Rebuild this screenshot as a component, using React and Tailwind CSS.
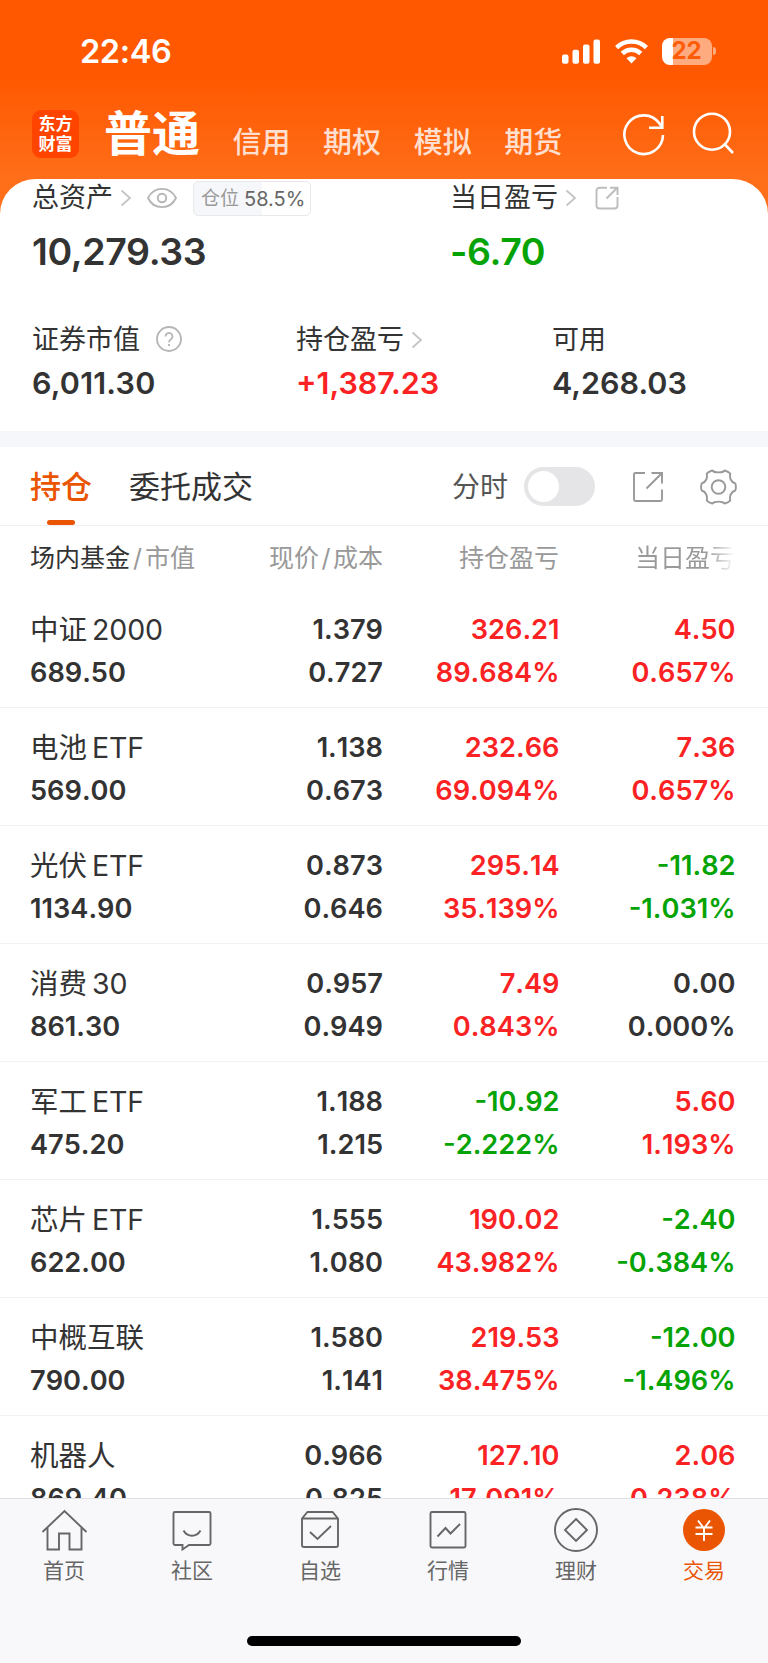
import React from 'react'
import clsx from 'clsx'

const tones = {
  up: 'text-[#fb2224]',
  down: 'text-[#06a306]',
  flat: 'text-[#333333]',
}

const accounts = ['信用', '期权', '模拟', '期货']

const holdings = [
  { name: '中证', suffix: '2000', value: '689.50', price: '1.379', cost: '0.727', profit: ['326.21', '89.684%', 'up'], today: ['4.50', '0.657%', 'up'] },
  { name: '电池', suffix: 'ETF', value: '569.00', price: '1.138', cost: '0.673', profit: ['232.66', '69.094%', 'up'], today: ['7.36', '0.657%', 'up'] },
  { name: '光伏', suffix: 'ETF', value: '1134.90', price: '0.873', cost: '0.646', profit: ['295.14', '35.139%', 'up'], today: ['-11.82', '-1.031%', 'down'] },
  { name: '消费', suffix: '30', value: '861.30', price: '0.957', cost: '0.949', profit: ['7.49', '0.843%', 'up'], today: ['0.00', '0.000%', 'flat'] },
  { name: '军工', suffix: 'ETF', value: '475.20', price: '1.188', cost: '1.215', profit: ['-10.92', '-2.222%', 'down'], today: ['5.60', '1.193%', 'up'] },
  { name: '芯片', suffix: 'ETF', value: '622.00', price: '1.555', cost: '1.080', profit: ['190.02', '43.982%', 'up'], today: ['-2.40', '-0.384%', 'down'] },
  { name: '中概互联', suffix: '', value: '790.00', price: '1.580', cost: '1.141', profit: ['219.53', '38.475%', 'up'], today: ['-12.00', '-1.496%', 'down'] },
  { name: '机器人', suffix: '', value: '869.40', price: '0.966', cost: '0.825', profit: ['127.10', '17.091%', 'up'], today: ['2.06', '0.238%', 'up'] },
]

function Chevron({ className }) {
  return (
    <svg className={clsx('h-[18px] w-[12px] shrink-0', className)} viewBox="0 0 12 18" fill="none" stroke="#c4c4c4" strokeWidth="1.8">
      <path d="M1.5 1.5 10 9l-8.500 7.500" />
    </svg>
  )
}

function StatusBar() {
  return (
    <div className="flex h-[102px] items-center pl-[80px] pr-[52px] text-white">
      <div className="mt-[2px] text-[32.500px] font-semibold leading-[40px] tracking-[-0.400px]">22:46</div>
      <svg className="ml-auto h-[25px] w-[39px]" viewBox="0 0 39 25" fill="#fff">
        <rect x="0" y="15.500" width="6.500" height="9.200" rx="2" />
        <rect x="10.500" y="10.700" width="6.500" height="14" rx="2" />
        <rect x="21" y="5.500" width="6.500" height="19.200" rx="2" />
        <rect x="31.500" y="0.500" width="6.500" height="24.200" rx="2" />
      </svg>
      <svg className="ml-[14px] h-[25px] w-[33px]" viewBox="0 0 33 25" fill="none" stroke="#fff" strokeWidth="4.600">
        <path d="M1.600 8.600a21.300 21.300 0 0 1 29.800 0" />
        <path d="M7.300 14.500a13.200 13.200 0 0 1 18.400 0" />
        <path d="M11.500 19.200a7.200 7.200 0 0 1 10 0l-5 5.300z" fill="#fff" stroke="none" />
      </svg>
      <div className="ml-[14px] flex h-[27px] w-[50px] items-center justify-center rounded-[8px] bg-[linear-gradient(90deg,#ffffff_23%,#ffab80_23%)] text-[24px] font-bold leading-none text-[#ff5c08]">
        22
      </div>
      <div className="ml-[1.500px] h-[8px] w-[3px] rounded-r-full bg-[#ffab80]" />
    </div>
  )
}

function AccountNav() {
  return (
    <div className="flex h-[77px] items-start pl-8 text-white">
      <div className="mt-[8px] h-[48px] w-[47px] rounded-[9px] bg-[#ff4400] pt-[3px] text-center font-['Noto_Sans_CJK_SC',sans-serif] text-[17px] font-bold leading-[20px]">
        东方<br />财富
      </div>
      <div className="ml-[25px] mt-[2px] w-[103px] text-[48px] font-bold leading-[60px]">普通</div>
      <div className="mt-[21px] flex flex-1 text-[29px] font-medium leading-[40px] text-[#ffdfcf]">
        {accounts.map((name) => (
          <div key={name} className="w-[90.600px] pl-[25.500px] whitespace-nowrap">{name}</div>
        ))}
      </div>
      <svg className="mt-[10px] h-[44px] w-[44px]" viewBox="0 0 44 44" fill="none" stroke="#fff" strokeWidth="2.600">
        <path d="M41 23A19.300 19.300 0 1 1 37.500 11.600L40 15" />
        <path d="M40.300 4v11.700H27" />
      </svg>
      <svg className="ml-[24px] mr-[34px] mt-[10px] h-[44px] w-[44px]" viewBox="0 0 44 44" fill="none" stroke="#fff" strokeWidth="2.600">
        <circle cx="22" cy="19.700" r="18" />
        <path d="m34 31.500 9 9.500" />
      </svg>
    </div>
  )
}

function Summary() {
  return (
    <div className="h-[252px] rounded-t-[35px] bg-white px-8 text-[#333333]">
      <div className="flex h-[37px] items-center text-[27px] leading-[37px]">
        <div className="flex w-[418px] items-center">
          <span>总资产</span>
          <Chevron className="ml-[7px]" />
          <svg className="ml-[15px] h-[22px] w-[30px]" viewBox="0 0 30 22" fill="none" stroke="#b5b5b5" strokeWidth="1.900">
            <path d="M1 11C7-1.200 23-1.200 29 11 23 23.200 7 23.200 1 11z" />
            <circle cx="15" cy="11" r="4.200" />
          </svg>
          <div className="ml-[16px] mt-[2px] flex h-[35px] w-[118px] items-center rounded-[5px] border border-[#e9e9ec] bg-[linear-gradient(90deg,#f6f7fa_58.500%,#ffffff_58.500%)] pl-[7px] text-[19px] leading-none text-[#999999]">
            仓位<span className="ml-[5px] text-[20px] text-[#666666]">58.5%</span>
          </div>
        </div>
        <span>当日盈亏</span>
        <Chevron className="ml-[7px]" />
        <svg className="ml-[18px] h-[24px] w-[24px]" viewBox="0 0 24 24" fill="none" stroke="#bdbdbd" strokeWidth="1.900">
          <path d="M12 1.800H4.500a3 3 0 0 0-3 3v14.700a3 3 0 0 0 3 3h15a3 3 0 0 0 3-3V11" />
          <path d="M11.500 12.500 22 2M15 1.800h7.500V9" />
        </svg>
      </div>
      <div className="mt-[14px] flex text-[37.500px] font-semibold leading-[44px] tracking-[-0.400px]">
        <div className="w-[418px]">10,279.33</div>
        <div className={tones.down}>-6.70</div>
      </div>
      <div className="mt-[46px] flex text-[27px] leading-[40px]">
        <div className="flex w-[264px] items-center">
          证券市值
          <svg className="mb-[2px] ml-[16px] h-[26px] w-[26px]" viewBox="0 0 26 26" fill="none" stroke="#b5b5b5" strokeWidth="1.800">
            <circle cx="13" cy="13" r="12" />
            <path d="M9.500 10.500a3.500 3.500 0 1 1 5.500 2.800c-1.300.9-2 1.500-2 3M13 18v2" />
          </svg>
        </div>
        <div className="flex w-[256px] items-center">
          持仓盈亏
          <Chevron className="ml-[7px]" />
        </div>
        <div>可用</div>
      </div>
      <div className="mt-[3px] flex text-[30.500px] font-semibold leading-[40px]">
        <div className="w-[264px] tracking-[0.200px]">6,011.30</div>
        <div className={clsx('w-[256px]', tones.up)}>+1,387.23</div>
        <div>4,268.03</div>
      </div>
    </div>
  )
}

function Toolbar() {
  return (
    <div className="flex h-[79px] items-center border-b border-[#f1f1f3] pl-[30px] pr-[31px] text-[31px] text-[#333333]">
      <div className="relative flex h-full items-center pt-[2px] font-medium text-[#ea5504]">
        持仓
        <div className="absolute bottom-0 left-[17px] h-[5px] w-[28px] rounded-[2.500px] bg-[#ea5504]" />
      </div>
      <div className="ml-[37px] pt-[2px]">委托成交</div>
      <div className="ml-auto pt-[2px] text-[28px] text-[#555555]">分时</div>
      <div className="ml-[16px] mt-[1px] flex h-[39px] w-[71px] items-center rounded-full bg-[#e5e5e7] p-[4px]">
        <div className="h-[31px] w-[31px] rounded-full bg-white" />
      </div>
      <svg className="ml-[37px] mt-[1px] h-[32px] w-[32px]" viewBox="0 0 32 32" fill="none" stroke="#999999" strokeWidth="1.900">
        <path d="M13 2H3.500A1.500 1.500 0 0 0 2 3.500v25A1.500 1.500 0 0 0 3.500 30h25a1.500 1.500 0 0 0 1.500-1.500V18.500" />
        <path d="M14.500 17.500 30 2M19.500 2H30v10.500" />
      </svg>
      <svg className="ml-[36px] mt-[1px] h-[36px] w-[37px]" viewBox="0 0 37 36" fill="none" stroke="#999999" strokeWidth="1.900" strokeLinejoin="round">
        <path d="M12.300 1.500C14.500 4 22.500 4 24.700 1.500Q28.500 2.500 30.300 4.700C29.300 8.300 30.800 13.300 35.300 14.500Q36.500 18 35.300 21.500C30.800 22.700 29.300 27.700 30.300 31.300Q28.500 33.500 24.700 34.500C22.500 32 14.500 32 12.300 34.500Q8.500 33.500 6.700 31.300C7.700 27.700 6.200 22.700 1.700 21.500Q.5 18 1.700 14.500C6.200 13.300 7.700 8.300 6.700 4.700Q8.500 2.500 12.300 1.500Z" />
        <circle cx="18.500" cy="18" r="6.800" />
      </svg>
    </div>
  )
}

function HoldingRow({ item }) {
  return (
    <div className="grid h-[118px] shrink-0 grid-cols-[177px_176px_176.500px_176px] border-b border-[#f3f3f5] pl-[30px] pt-[18px] text-[27.200px] font-semibold leading-[43px] text-[#333333] [font-kerning:none]">
      <div className="whitespace-nowrap">
        <div className="text-[28.500px] font-normal">
          {item.name}
          {item.suffix && <span className="ml-[5px] tracking-[-0.100px]">{item.suffix}</span>}
        </div>
        <div>{item.value}</div>
      </div>
      <div className="text-right">
        <div>{item.price}</div>
        <div>{item.cost}</div>
      </div>
      {[item.profit, item.today].map(([amount, rate, tone], i) => (
        <div key={i} className={clsx('text-right', tones[tone])}>
          <div>{amount}</div>
          <div>{rate}</div>
        </div>
      ))}
    </div>
  )
}

function Holdings() {
  return (
    <div className="flex h-[972px] flex-col overflow-hidden bg-white">
      <div className="grid h-[64px] shrink-0 grid-cols-[177px_176px_176px_176px] pl-[30px] text-[25px] leading-[65px] text-[#999999]">
        <div className="whitespace-nowrap">
          <span className="text-[#333333]">场内基金</span>
          <span className="mx-[3px]">/</span>市值
        </div>
        <div className="text-right">现价<span className="mx-[2.500px]">/</span>成本</div>
        <div className="text-right">持仓盈亏</div>
        <div className="bg-[linear-gradient(90deg,#999999_84%,#ffffff_100%)] bg-clip-text text-right text-transparent">当日盈亏</div>
      </div>
      {holdings.map((item) => (
        <HoldingRow key={item.name} item={item} />
      ))}
    </div>
  )
}

const tabs = [
  {
    label: '首页',
    icon: (
      <>
        <path d="M.5 23 22.500 2 44.500 23" />
        <path d="M5.500 19v21.500H17v-16h10.500v16H39.500V19" />
      </>
    ),
  },
  {
    label: '社区',
    icon: (
      <>
        <path d="M5 3h34a1.500 1.500 0 0 1 1.500 1.500v30A1.500 1.500 0 0 1 39 36H19l-6.500 4.500V36H5a1.500 1.500 0 0 1-1.500-1.500v-30A1.500 1.500 0 0 1 5 3z" />
        <path d="M13.500 21.500c4 7 13 7 17 0" />
      </>
    ),
  },
  {
    label: '自选',
    icon: (
      <>
        <path d="M4 9.500 9.500 3h25L40 9.500v26.500a2 2 0 0 1-2 2H6a2 2 0 0 1-2-2zM4 9.500h36" />
        <path d="m12 23 7.500 7L33 17" />
      </>
    ),
  },
  {
    label: '行情',
    icon: (
      <>
        <rect x="4.500" y="3" width="35" height="35.500" rx="1.500" />
        <path d="m11.500 27.500 8-8.500 5 5.500 9.500-9.500" />
      </>
    ),
  },
  {
    label: '理财',
    icon: (
      <>
        <circle cx="22" cy="21" r="21" />
        <path d="M22 10 33 21 22 32 11 21z" />
      </>
    ),
  },
  {
    label: '交易',
    active: true,
    icon: (
      <>
        <circle cx="22" cy="21" r="21" fill="#ea5504" stroke="none" />
        <path d="m16 11.500 6 8 6-8M22 19.500V32M13.500 18.500h17M13.500 25h17" stroke="#fff" />
      </>
    ),
  },
]

function TabBar() {
  return (
    <div className="h-[165px] border-t border-[#dfdfe5] bg-[#f8f8fb]">
      <div className="grid h-[137px] grid-cols-6">
        {tabs.map((tab) => (
          <div key={tab.label} className={clsx('flex flex-col items-center', tab.active ? 'text-[#ea5504]' : 'text-[#666666]')}>
            <svg className="mt-[10px] h-[42px] w-[44px] overflow-visible" viewBox="0 0 44 42" fill="none" stroke="currentColor" strokeWidth="1.900">
              {tab.icon}
            </svg>
            <div className="mt-[5px] text-[21px] leading-[30px]">{tab.label}</div>
          </div>
        ))}
      </div>
      <div className="mx-auto h-[10px] w-[274px] rounded-full bg-black" />
    </div>
  )
}

export default function App() {
  return (
    <div className="h-[1663px] w-[768px] overflow-hidden bg-white font-[Inter,'Noto_Sans_CJK_SC',sans-serif]">
      <div className="bg-[linear-gradient(180deg,#ff5800_0px,#ff5800_75px,#ff6e19_179px,#ff6e19_100%)]">
        <StatusBar />
        <AccountNav />
        <Summary />
      </div>
      <div className="h-[16px] bg-[#f6f7fa]" />
      <Toolbar />
      <Holdings />
      <TabBar />
    </div>
  )
}
